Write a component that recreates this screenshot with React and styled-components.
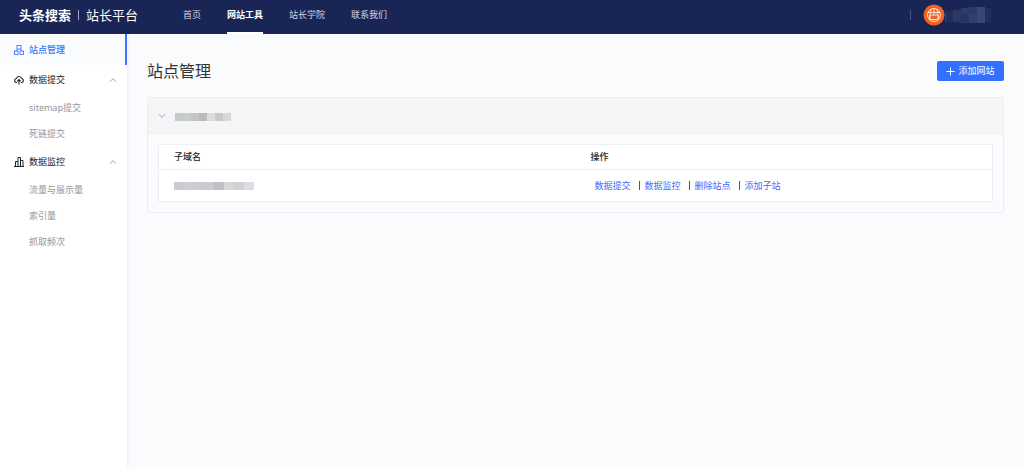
import React, { useState } from "react";
import styled, { createGlobalStyle } from "styled-components";

const GlobalStyle = createGlobalStyle`
  * { box-sizing: border-box; }
  body {
    margin: 0;
    background: #fafbfd;
    color: #333;
    font: 9px/14px "Noto Sans", "Noto Sans CJK SC", sans-serif;
  }
  button { font: inherit; cursor: pointer; border: 0; background: none; padding: 0; }
  a { text-decoration: none; }
  ul { list-style: none; margin: 0; padding: 0; }
`;

const Page = styled.div`
  min-height: 100vh;
  display: flex;
  flex-direction: column;
`;

const Header = styled.header`
  height: 34px;
  flex: none;
  display: flex;
  align-items: center;
  padding: 0 33px 0 19px;
  background: #192655;
  color: #fff;
`;

const Brand = styled.a`
  display: flex;
  align-items: center;
  gap: 7px;
  color: #fff;
  font-size: 13px;
  line-height: 30px;
  padding-bottom: 4px;
`;

const BrandName = styled.span`
  font-weight: ${(p) => (p.$bold ? 700 : 400)};
`;

const Divider = styled.span`
  width: 1px;
  height: 10px;
  background: ${(p) => p.$color};
`;

const Nav = styled.nav`
  display: flex;
  align-self: stretch;
  gap: 26px;
  margin-left: 45px;
  flex: 1;
`;

const NavLink = styled.a`
  height: 34px;
  line-height: 30px;
  color: ${(p) => (p.$active ? "#fff" : "#d3d6e1")};
  font-weight: ${(p) => (p.$active ? 700 : 400)};
  border-bottom: 2px solid ${(p) => (p.$active ? "#fff" : "transparent")};
`;

const Account = styled.div`
  display: flex;
  align-items: center;
  padding-bottom: 4px;
`;

const Avatar = styled.svg`
  margin-left: 12px;
  display: block;
`;

const Body = styled.div`
  flex: 1;
  display: flex;
`;

const Sidebar = styled.aside`
  width: 127px;
  flex: none;
  background: #fff;
  box-shadow: 1px 0 3px rgba(30, 40, 80, 0.06);
`;

const SiteLink = styled.a`
  height: 31px;
  display: flex;
  align-items: center;
  gap: 5px;
  padding-left: 14px;
  color: #3370ff;
  font-weight: 500;
  background: #fafbfd;
  border-right: 2px solid #3b78ff;
`;

const GroupButton = styled.button`
  width: 100%;
  height: 30px;
  display: flex;
  align-items: center;
  gap: 5px;
  padding: 0 10px 0 14px;
  color: #222;
  text-align: left;
`;

const GroupLabel = styled.span`
  flex: 1;
`;

const SubLink = styled.a`
  display: block;
  padding-left: 29px;
  line-height: 26px;
  color: #92969c;
`;

const Main = styled.main`
  flex: 1;
  min-width: 0;
  padding: 26px 20px 20px;
`;

const TitleRow = styled.div`
  display: flex;
  align-items: center;
  justify-content: space-between;
  height: 22px;
  margin-bottom: 15px;
`;

const Title = styled.h1`
  margin: 0;
  font-size: 16px;
  line-height: 22px;
  font-weight: 400;
  color: #333;
`;

const AddButton = styled.button`
  display: flex;
  align-items: center;
  justify-content: center;
  gap: 3px;
  width: 67px;
  height: 20px;
  border-radius: 2px;
  background: #3370ff;
  color: #fff;
`;

const Card = styled.section`
  border: 1px solid #eeeff2;
  border-radius: 3px;
  overflow: hidden;
`;

const CardToggle = styled.button`
  width: 100%;
  height: 36px;
  display: flex;
  align-items: center;
  gap: 9px;
  padding: 2px 10px 0;
  background: #f4f5f7;
  border-bottom: 1px solid #eeeff2;
`;

const CardBody = styled.div`
  padding: 10px;
`;

const Table = styled.table`
  width: 100%;
  table-layout: fixed;
  border-collapse: separate;
  border-spacing: 0;
  border: 1px solid #eeeff2;
  background: #fff;
`;

const HeadCell = styled.th`
  height: 25px;
  padding: 0 15px;
  text-align: left;
  font-weight: 500;
  color: #222;
  border-bottom: 1px solid #eeeff2;
`;

const Cell = styled.td`
  height: 31px;
  padding: 0 15px;
`;

const Actions = styled.div`
  display: flex;
  align-items: center;
  padding-left: 4px;
`;

const Action = styled.a`
  color: #3f6bff;
  & + & {
    display: flex;
    align-items: center;
    margin-left: 8px;
  }
  & + &::before {
    content: "";
    width: 1px;
    height: 9px;
    margin-right: 5px;
    background: #555;
  }
`;

const Block = styled.svg`
  display: block;
`;

function Mosaic({ colors, size, height, label }) {
  return (
    <Block width={colors.length * size} height={height} role="img" aria-label={label}>
      {colors.map((c, i) => (
        <rect key={i} x={i * size} width={size} height={height} fill={c} />
      ))}
    </Block>
  );
}

function UserMosaic() {
  const columns = [
    ["#25325f", 11, 11], ["#2b3764", 10, 12], ["#303c68", 8, 15],
    ["#2c3865", 7, 16], ["#3a4570", 7, 16], ["#222e5c", 8, 14],
  ];
  return (
    <Block width="46" height="30" role="img" aria-label="用户名">
      <rect x="0" y="12" width="1" height="10" fill="#b5583a" />
      {columns.map(([fill, y, h], i) => (
        <rect key={i} x={i * 8} y={y} width="8" height={h} fill={fill} opacity={i === 0 ? 0.7 : 1} />
      ))}
      <rect x="16" y="14" width="8" height="8" fill="#29355f" />
      <rect x="24" y="14" width="8" height="8" fill="#333f6a" />
    </Block>
  );
}

function Chevron({ up }) {
  return (
    <svg width="8" height="8" viewBox="0 0 8 8" fill="none" stroke="#999ca3" strokeWidth="0.9">
      <path d={up ? "M1 5.8 4 2.6 7 5.8" : "M1 1.2 4 4.4 7 1.2"} />
    </svg>
  );
}

const iconProps = { width: 10, height: 10, viewBox: "0 0 20 20", fill: "none", stroke: "currentColor", strokeWidth: 1.7 };

function SitesIcon() {
  return (
    <svg {...iconProps}>
      <rect x="6" y="1" width="8" height="7" />
      <rect x="1" y="12" width="7" height="7" />
      <rect x="12" y="12" width="7" height="7" />
      <path d="M7 8 4.500 12M13 8l2.500 4" />
    </svg>
  );
}

function UploadIcon() {
  return (
    <svg {...iconProps} strokeWidth="2.200">
      <path d="M6 15H5a4 4 0 0 1-.5-7.900A5.700 5.700 0 0 1 15.500 7.100 4 4 0 0 1 15 15h-1" />
      <path d="M10 19V9.500M6.500 12.800 10 9.200l3.500 3.600" />
    </svg>
  );
}

function ChartIcon() {
  return (
    <svg {...iconProps} strokeWidth="2">
      <path d="M0 19h20M3 18V9h5M8 18V1h5v17M13 7h5v11" />
    </svg>
  );
}

function PlusIcon() {
  return (
    <svg width="9" height="9" viewBox="0 0 9 9" stroke="#fff" strokeWidth="1">
      <path d="M4.500 0.500v8M0.500 4.500h8" />
    </svg>
  );
}

function AvatarIcon() {
  return (
    <Avatar width="22" height="22" viewBox="0 0 22 22" fill="none" role="img" aria-label="头像">
      <circle cx="11" cy="11" r="10.500" fill="#f2611f" />
      <g stroke="#ffe3d3" strokeWidth="1">
        <circle cx="11" cy="11" r="6.500" />
        <path d="M5 8.500h12M11 4.500v6M8.500 5C7.500 6.500 7.300 8.500 7.300 11M13.500 5c1 1.500 1.200 3.500 1.200 6M6.500 15.500v-4.500M15.500 15.500v-4.500" />
      </g>
      <rect x="7" y="11" width="8" height="4.500" rx="1" fill="#f2611f" stroke="#ffe3d3" strokeWidth="1" />
    </Avatar>
  );
}

const navItems = ["首页", "网站工具", "站长学院", "联系我们"];
const groups = [
  { title: "数据提交", Icon: UploadIcon, items: ["sitemap提交", "死链提交"] },
  { title: "数据监控", Icon: ChartIcon, items: ["流量与展示量", "索引量", "抓取频次"] },
];
const actions = ["数据提交", "数据监控", "删除站点", "添加子站"];
const siteColors = ["#c9cac7", "#c8cecd", "#c6c6c3", "#bcbbb9", "#dadcde", "#c9c9cb", "#d7d8da"];
const domainColors = ["#c9cbd0", "#cdced1", "#c8cdd1", "#cbcbcf", "#bfc0c5", "#d8d6d6", "#cdd0d6", "#dcdee1"];

function Group({ title, Icon, items }) {
  const [open, setOpen] = useState(true);
  return (
    <li>
      <GroupButton type="button" aria-expanded={open} onClick={() => setOpen(!open)}>
        <Icon />
        <GroupLabel>{title}</GroupLabel>
        <Chevron up={open} />
      </GroupButton>
      {open && (
        <ul>
          {items.map((item) => (
            <li key={item}><SubLink href="#">{item}</SubLink></li>
          ))}
        </ul>
      )}
    </li>
  );
}

export default function App() {
  const [open, setOpen] = useState(true);
  return (
    <Page>
      <GlobalStyle />
      <Header>
        <Brand href="#">
          <BrandName $bold>头条搜索</BrandName>
          <Divider $color="#a3a8bb" />
          <BrandName>站长平台</BrandName>
        </Brand>
        <Nav>
          {navItems.map((item) => (
            <NavLink key={item} href="#" $active={item === "网站工具"}>{item}</NavLink>
          ))}
        </Nav>
        <Account>
          <Divider $color="#4a5478" />
          <AvatarIcon />
          <UserMosaic />
        </Account>
      </Header>
      <Body>
        <Sidebar>
          <ul>
            <li><SiteLink href="#"><SitesIcon />站点管理</SiteLink></li>
            {groups.map((g) => <Group key={g.title} {...g} />)}
          </ul>
        </Sidebar>
        <Main>
          <TitleRow>
            <Title>站点管理</Title>
            <AddButton type="button"><PlusIcon />添加网站</AddButton>
          </TitleRow>
          <Card>
            <CardToggle type="button" aria-expanded={open} onClick={() => setOpen(!open)}>
              <Chevron />
              <Mosaic colors={siteColors} size={8} height={8} label="网站" />
            </CardToggle>
            {open && (
              <CardBody>
                <Table>
                  <thead>
                    <tr>
                      <HeadCell scope="col">子域名</HeadCell>
                      <HeadCell scope="col">操作</HeadCell>
                    </tr>
                  </thead>
                  <tbody>
                    <tr>
                      <Cell><Mosaic colors={domainColors} size={10} height={8} label="子域名" /></Cell>
                      <Cell>
                        <Actions>
                          {actions.map((a) => <Action key={a} href="#">{a}</Action>)}
                        </Actions>
                      </Cell>
                    </tr>
                  </tbody>
                </Table>
              </CardBody>
            )}
          </Card>
        </Main>
      </Body>
    </Page>
  );
}
